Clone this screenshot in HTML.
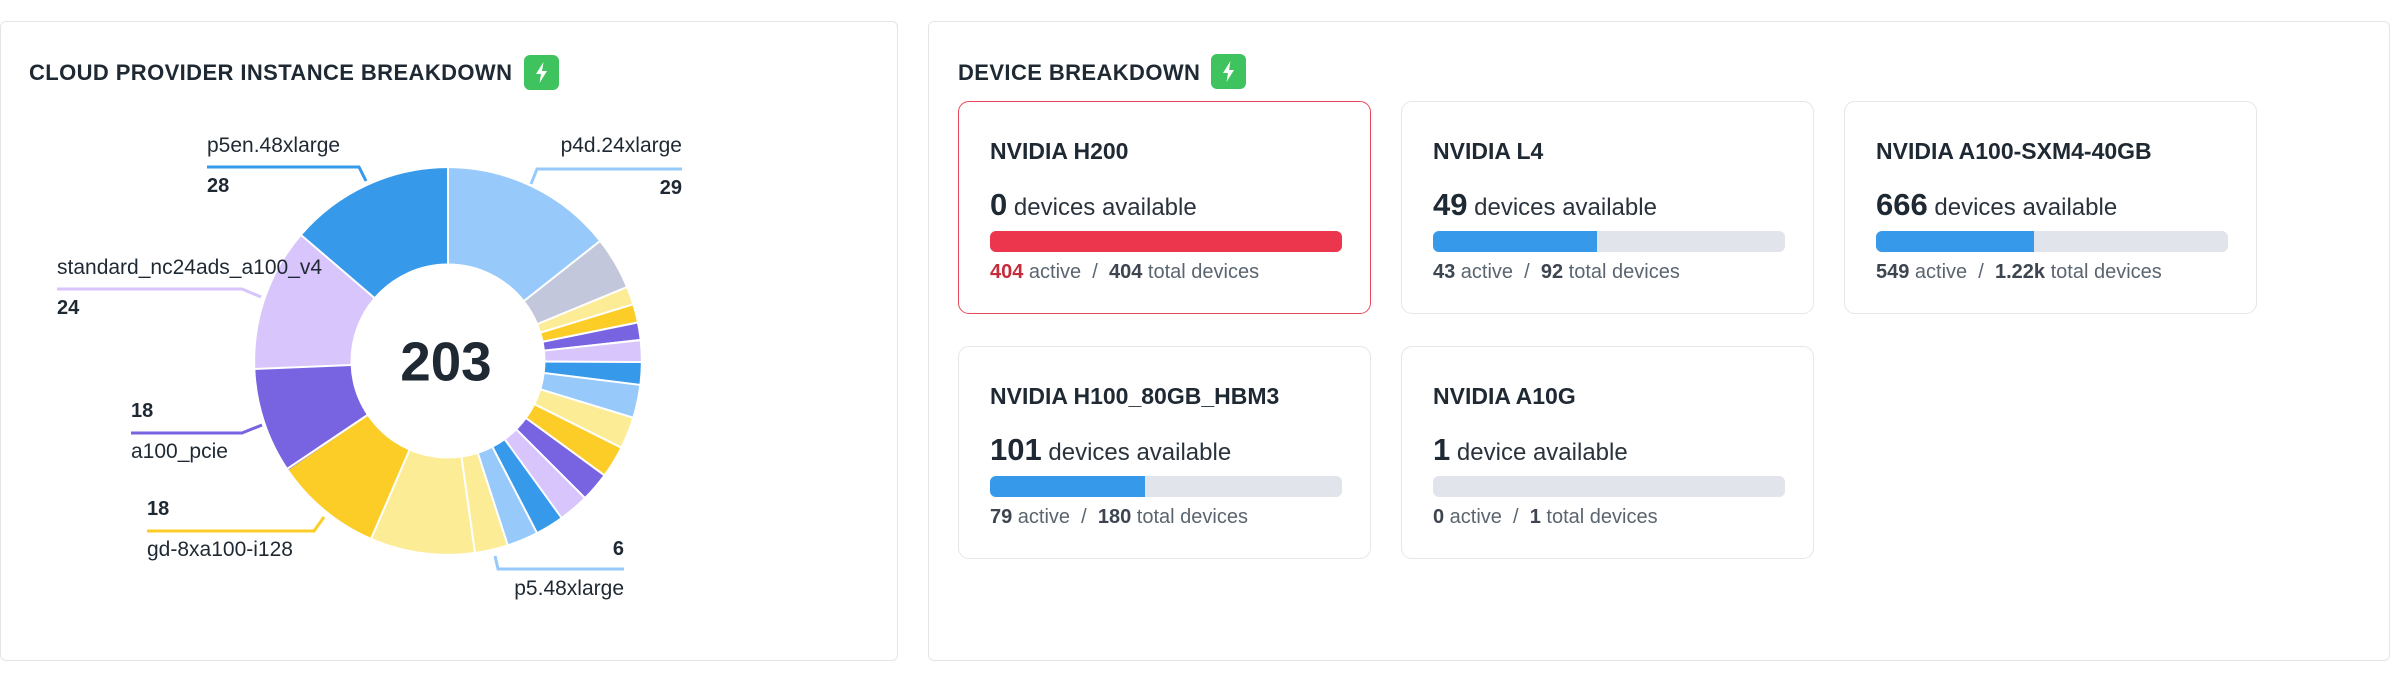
<!DOCTYPE html>
<html><head><meta charset="utf-8">
<style>
*{box-sizing:border-box;margin:0;padding:0}
body{width:2404px;height:674px;background:#fff;font-family:"Liberation Sans",sans-serif;color:#1f2933;position:relative;overflow:hidden}
.panel{position:absolute;top:21px;height:640px;border:1.5px solid #e3e5e9;border-radius:6px;background:#fff}
.title{position:absolute;font-weight:bold;font-size:22px;letter-spacing:0.4px;color:#1f2933;white-space:nowrap}
.badge{position:absolute;width:35px;height:35px;background:#3fc35f;border-radius:6px}
.card{position:absolute;width:413px;height:213px;border:1.5px solid #e4e6ea;border-radius:11px;background:#fff}
.card.red{border-color:#e8485b}
.card .t{position:absolute;left:31px;top:36px;font-weight:bold;font-size:23px;white-space:nowrap}
.card .a{position:absolute;left:31px;top:85px;font-size:24px;white-space:nowrap;color:#2a333d}
.card .a b{font-size:31px;color:#1f2933}
.bar{position:absolute;left:31px;top:129px;width:352px;height:21px;border-radius:6px;background:#e1e4ea;overflow:hidden}
.bar i{display:block;height:100%;background:#3699ea}
.card .s{position:absolute;left:31px;top:159px;font-size:20px;color:#5b6570;white-space:nowrap}
.card .s b{color:#3c4550}
.lbl{position:absolute;font-size:21px;color:#1f2933;white-space:nowrap}
.num{position:absolute;font-size:20px;font-weight:bold;color:#1f2933}
</style></head><body>

<div class="panel" style="left:0;width:898px"></div>
<div class="title" style="left:29px;top:60px">CLOUD PROVIDER INSTANCE BREAKDOWN</div>
<div class="badge" style="left:524px;top:55px"><svg width="35" height="35" viewBox="0 0 35 35"><path d="M19.5 7 L12 19 H17 L15.5 28 L23 16 H18 Z" fill="#fff"/></svg></div>

<svg style="position:absolute;left:0;top:0" width="900" height="674">
<g transform="translate(448 361) scale(1.015) translate(-453 -364)">
<g transform="rotate(-90 453 364)" fill="none" stroke-width="94">
<circle cx="453" cy="364" r="143" stroke="#97cafb" stroke-dasharray="128.5 900" stroke-dashoffset="0"/>
<circle cx="453" cy="364" r="143" stroke="#c3c7dc" stroke-dasharray="39.9 900" stroke-dashoffset="-128.5"/>
<circle cx="453" cy="364" r="143" stroke="#fdec96" stroke-dasharray="13.7 900" stroke-dashoffset="-168.5"/>
<circle cx="453" cy="364" r="143" stroke="#fccc27" stroke-dasharray="13.2 900" stroke-dashoffset="-182.2"/>
<circle cx="453" cy="364" r="143" stroke="#7863e0" stroke-dasharray="12.7 900" stroke-dashoffset="-195.4"/>
<circle cx="453" cy="364" r="143" stroke="#d8c5fb" stroke-dasharray="17.2 900" stroke-dashoffset="-208.1"/>
<circle cx="453" cy="364" r="143" stroke="#3699ea" stroke-dasharray="16.7 900" stroke-dashoffset="-225.4"/>
<circle cx="453" cy="364" r="143" stroke="#97cafb" stroke-dasharray="25 900" stroke-dashoffset="-242.1"/>
<circle cx="453" cy="364" r="143" stroke="#fdec96" stroke-dasharray="24.2 900" stroke-dashoffset="-267.1"/>
<circle cx="453" cy="364" r="143" stroke="#fccc27" stroke-dasharray="23.2 900" stroke-dashoffset="-291.3"/>
<circle cx="453" cy="364" r="143" stroke="#7863e0" stroke-dasharray="22.5 900" stroke-dashoffset="-314.5"/>
<circle cx="453" cy="364" r="143" stroke="#d8c5fb" stroke-dasharray="21.7 900" stroke-dashoffset="-336.9"/>
<circle cx="453" cy="364" r="143" stroke="#3699ea" stroke-dasharray="22 900" stroke-dashoffset="-358.6"/>
<circle cx="453" cy="364" r="143" stroke="#97cafb" stroke-dasharray="23.7 900" stroke-dashoffset="-380.6"/>
<circle cx="453" cy="364" r="143" stroke="#fdec96" stroke-dasharray="25 900" stroke-dashoffset="-404.3"/>
<circle cx="453" cy="364" r="143" stroke="#fdec96" stroke-dasharray="78.9 900" stroke-dashoffset="-429.3"/>
<circle cx="453" cy="364" r="143" stroke="#fccc27" stroke-dasharray="79.9 900" stroke-dashoffset="-508.1"/>
<circle cx="453" cy="364" r="143" stroke="#7863e0" stroke-dasharray="79.9 900" stroke-dashoffset="-588"/>
<circle cx="453" cy="364" r="143" stroke="#d8c5fb" stroke-dasharray="107.1 900" stroke-dashoffset="-667.9"/>
<circle cx="453" cy="364" r="143" stroke="#3699ea" stroke-dasharray="123.5 900" stroke-dashoffset="-775"/>
</g>
<g stroke="#fff" stroke-width="2">
<line x1="453" y1="364" x2="453" y2="170"/>
<line x1="453" y1="364" x2="605" y2="244"/>
<line x1="453" y1="364" x2="632" y2="290"/>
<line x1="453" y1="364" x2="639" y2="307"/>
<line x1="453" y1="364" x2="645" y2="325"/>
<line x1="453" y1="364" x2="647" y2="343"/>
<line x1="453" y1="364" x2="647" y2="365"/>
<line x1="453" y1="364" x2="646" y2="388"/>
<line x1="453" y1="364" x2="639" y2="421"/>
<line x1="453" y1="364" x2="627" y2="451"/>
<line x1="453" y1="364" x2="609" y2="478"/>
<line x1="453" y1="364" x2="590" y2="501"/>
<line x1="453" y1="364" x2="566" y2="520"/>
<line x1="453" y1="364" x2="542" y2="536"/>
<line x1="453" y1="364" x2="513" y2="549"/>
<line x1="453" y1="364" x2="480" y2="556"/>
<line x1="453" y1="364" x2="376" y2="542"/>
<line x1="453" y1="364" x2="292" y2="472"/>
<line x1="453" y1="364" x2="259" y2="372"/>
<line x1="453" y1="364" x2="306" y2="238"/>
</g>
<circle cx="453" cy="364" r="95" fill="#fff"/>
<text x="451" y="383" text-anchor="middle" font-family="Liberation Sans, sans-serif" font-weight="bold" font-size="54" fill="#1f2933">203</text>
</g>
<g fill="none" stroke-width="3">
<polyline points="207,167 359,167 366,181" stroke="#3699ea"/>
<polyline points="531,184 537,169 682,169" stroke="#97cafb"/>
<polyline points="57,289 242,289 261,297" stroke="#d8c5fb"/>
<polyline points="131,433 242,433 262,425" stroke="#7863e0"/>
<polyline points="147,531 314,531 324,517" stroke="#fccc27"/>
<polyline points="495,556 498,569 624,569" stroke="#97cafb"/>
</g>
</svg>
<div class="lbl" style="left:207px;top:134px">p5en.48xlarge</div>
<div class="num" style="left:207px;top:175px">28</div>
<div class="lbl" style="right:1722px;top:134px">p4d.24xlarge</div>
<div class="num" style="right:1722px;top:177px">29</div>
<div class="lbl" style="left:57px;top:256px">standard_nc24ads_a100_v4</div>
<div class="num" style="left:57px;top:297px">24</div>
<div class="num" style="left:131px;top:400px">18</div>
<div class="lbl" style="left:131px;top:440px">a100_pcie</div>
<div class="num" style="left:147px;top:498px">18</div>
<div class="lbl" style="left:147px;top:538px">gd-8xa100-i128</div>
<div class="num" style="right:1780px;top:538px">6</div>
<div class="lbl" style="right:1780px;top:577px">p5.48xlarge</div>

<div class="panel" style="left:928px;width:1462px"></div>
<div class="title" style="left:958px;top:60px">DEVICE BREAKDOWN</div>
<div class="badge" style="left:1211px;top:54px"><svg width="35" height="35" viewBox="0 0 35 35"><path d="M19.5 7 L12 19 H17 L15.5 28 L23 16 H18 Z" fill="#fff"/></svg></div>

<div class="card red" style="left:958px;top:101px">
<div class="t">NVIDIA H200</div>
<div class="a"><b>0</b> devices available</div>
<div class="bar"><i style="width:100%;background:#ec364d"></i></div>
<div class="s"><b style="color:#c42d3c">404</b> active &nbsp;/&nbsp; <b>404</b> total devices</div>
</div>
<div class="card" style="left:1401px;top:101px">
<div class="t">NVIDIA L4</div>
<div class="a"><b>49</b> devices available</div>
<div class="bar"><i style="width:46.7%"></i></div>
<div class="s"><b>43</b> active &nbsp;/&nbsp; <b>92</b> total devices</div>
</div>
<div class="card" style="left:1844px;top:101px">
<div class="t">NVIDIA A100-SXM4-40GB</div>
<div class="a"><b>666</b> devices available</div>
<div class="bar"><i style="width:45%"></i></div>
<div class="s"><b>549</b> active &nbsp;/&nbsp; <b>1.22k</b> total devices</div>
</div>
<div class="card" style="left:958px;top:346px">
<div class="t">NVIDIA H100_80GB_HBM3</div>
<div class="a"><b>101</b> devices available</div>
<div class="bar"><i style="width:44%"></i></div>
<div class="s"><b>79</b> active &nbsp;/&nbsp; <b>180</b> total devices</div>
</div>
<div class="card" style="left:1401px;top:346px">
<div class="t">NVIDIA A10G</div>
<div class="a"><b>1</b> device available</div>
<div class="bar"><i style="width:0"></i></div>
<div class="s"><b>0</b> active &nbsp;/&nbsp; <b>1</b> total devices</div>
</div>
</body></html>
